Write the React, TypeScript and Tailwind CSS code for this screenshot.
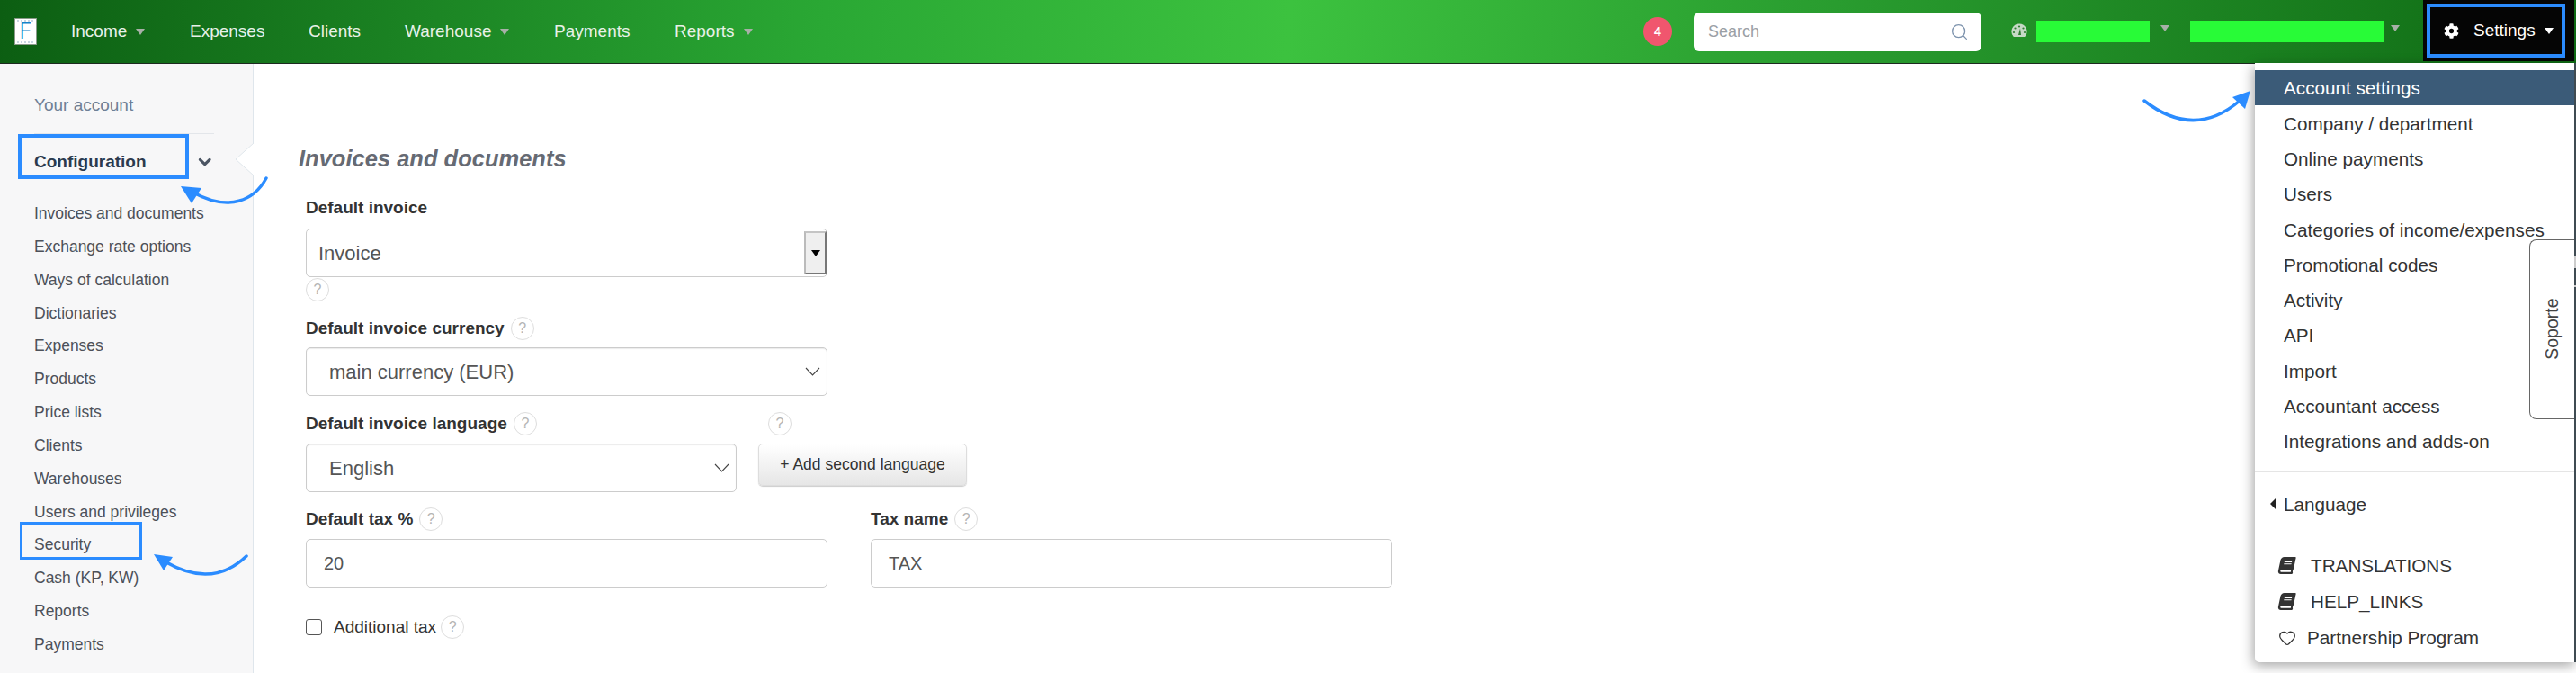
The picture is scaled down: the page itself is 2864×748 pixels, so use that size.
import { ChevronDown, Heart, Search } from 'lucide-react'
import { FaBook, FaCog } from 'react-icons/fa'

const fontSans = "font-['Liberation_Sans',Arial,sans-serif]"

const configLinks = [
  'Invoices and documents',
  'Exchange rate options',
  'Ways of calculation',
  'Dictionaries',
  'Expenses',
  'Products',
  'Price lists',
  'Clients',
  'Warehouses',
  'Users and privileges',
  'Security',
  'Cash (KP, KW)',
  'Reports',
  'Payments',
]

const settingsLinks = [
  'Company / department',
  'Online payments',
  'Users',
  'Categories of income/expenses',
  'Promotional codes',
  'Activity',
  'API',
  'Import',
  'Accountant access',
  'Integrations and adds-on',
]

function Caret({ className = 'border-t-[#a8b0a8]' }: { className?: string }) {
  return <span className={`inline-block h-0 w-0 border-x-[5px] border-t-[7px] border-x-transparent ${className}`} />
}

function Help({ className = '' }: { className?: string }) {
  return (
    <span
      className={`inline-flex h-[26px] w-[26px] shrink-0 items-center justify-center rounded-full border border-[#dddddd] bg-white text-[16px] font-normal text-[#b5b5b5] ${className}`}
    >
      ?
    </span>
  )
}

function NavItem({ label, caret, width }: { label: string; caret?: boolean; width: string }) {
  return (
    <div className={`flex items-center gap-[10px] text-[19px] text-[#e8f1e8] ${width}`}>
      {label}
      {caret && <Caret />}
    </div>
  )
}

function Arrow({ className, line, head, viewBox }: { className: string; line: string; head: string; viewBox: string }) {
  return (
    <svg className={`pointer-events-none absolute ${className}`} viewBox={viewBox} fill="none">
      <path d={line} stroke="#2b8cff" strokeWidth="3.5" strokeLinecap="round" />
      <polygon points={head} fill="#2b8cff" />
    </svg>
  )
}

function Gauge() {
  return (
    <svg viewBox="0 0 20 20" className="h-5 w-5">
      <path d="M10 1.5a8.5 8.5 0 0 0-6.6 13.9c.3.4.7.6 1.2.6h10.8c.5 0 .9-.2 1.2-.6A8.5 8.5 0 0 0 10 1.5z" fill="#c6d9c6" />
      <circle cx="10" cy="4.5" r="1.1" fill="#2f7d32" />
      <circle cx="5.5" cy="6.5" r="1.1" fill="#2f7d32" />
      <circle cx="14.5" cy="6.5" r="1.1" fill="#2f7d32" />
      <circle cx="4" cy="11" r="1.1" fill="#2f7d32" />
      <circle cx="16" cy="11" r="1.1" fill="#2f7d32" />
      <path d="M9 14l2-7.5 1 7.5z" fill="#2f7d32" />
    </svg>
  )
}

function Logo() {
  return (
    <div className="relative ml-4 flex h-[30px] w-[25px] items-center justify-center border border-[#8a9a8a] bg-white font-['Inter',sans-serif] text-[24px] font-light leading-none text-[#1583c9]">
      <span className="absolute inset-x-[2px] top-[1px] h-[2px] bg-[repeating-linear-gradient(90deg,#c9d6e2_0,#c9d6e2_2px,transparent_2px,transparent_4px)]" />
      F
      <span className="absolute inset-x-[2px] bottom-[1px] h-[2px] bg-[repeating-linear-gradient(90deg,#c9d6e2_0,#c9d6e2_2px,transparent_2px,transparent_4px)]" />
    </div>
  )
}

function Header() {
  return (
    <header className="flex h-[71px] items-center border-b border-[#1d2a20] bg-[linear-gradient(95deg,#0c5e12_0%,#2aa834_32%,#3cc23f_50%,#2a9e30_70%,#0f6a14_100%)]">
      <Logo />
      <div className="ml-[38px] flex items-center">
        <NavItem label="Income" caret width="w-[132px]" />
        <NavItem label="Expenses" width="w-[132px]" />
        <NavItem label="Clients" width="w-[107px]" />
        <NavItem label="Warehouse" caret width="w-[166px]" />
        <NavItem label="Payments" width="w-[134px]" />
        <NavItem label="Reports" caret width="w-[120px]" />
      </div>
      <span className="ml-[957px] flex h-8 w-8 items-center justify-center rounded-full bg-[#f0566e] text-[14px] font-bold text-white">
        4
      </span>
      <div className="ml-6 flex h-[43px] w-[320px] items-center justify-between rounded-[6px] bg-white pl-4 pr-[14px]">
        <span className="text-[18px] text-[#9aa0a6]">Search</span>
        <Search size={21} strokeWidth={1.5} className="text-[#7d93ad]" />
      </div>
      <div className="ml-8">
        <Gauge />
      </div>
      <div className="ml-[9px] h-6 w-[126px] bg-[#28fb37]" />
      <span className="ml-3 -mt-[8px] flex">
        <Caret />
      </span>
      <div className="ml-[23px] h-6 w-[215px] bg-[#28fb37]" />
      <span className="ml-2 -mt-[8px] flex">
        <Caret />
      </span>
      <div className="ml-[26px] mr-[2px] flex h-[68px] flex-1 self-start bg-[#050505] p-1 pr-[10px]">
        <div className="flex h-[60px] flex-1 items-center border-4 border-[#2b8cff] pl-[15px] text-[19px] text-white">
          <FaCog size={17} />
          <span className="ml-[16px]">Settings</span>
          <Caret className="ml-[10px] border-t-white" />
        </div>
      </div>
    </header>
  )
}

function Sidebar() {
  return (
    <aside className="relative h-[677px] w-[282px] shrink-0 border-r border-[#dfe6ec] bg-[#f7f7f8] pl-[38px] pt-[35px]">
      <div className="text-[19px] leading-[22px] text-[#6f7f95]">Your account</div>
      <div className="mt-[20px] flex h-[50px] w-[200px] items-center border-t border-[#e3e6ea] pt-[13px] text-[19px] font-bold text-[#2b3a4e]">
        Configuration
        <ChevronDown size={24} strokeWidth={3.5} className="ml-[54px] text-[#4b5563]" />
      </div>
      <ul className="mt-[29px] flex flex-col gap-[16.85px] text-[17.5px] leading-[20px] text-[#4d5159]">
        {configLinks.map((link) => (
          <li key={link}>{link}</li>
        ))}
      </ul>
      <div className="absolute left-5 top-[78px] h-[50px] w-[190px] border-4 border-[#2b8cff]" />
      <div className="absolute left-[22px] top-[509px] h-[42px] w-[136px] border-[3.5px] border-[#2b8cff]" />
      <div className="absolute -right-px top-[88px] h-9 w-5 bg-white [clip-path:polygon(0_50%,100%_0,100%_100%)]" />
      <svg className="absolute -right-px top-[88px] h-9 w-5" viewBox="0 0 20 36" fill="none">
        <path d="M20 0L0 18l20 18" stroke="#dfe6ec" />
      </svg>
    </aside>
  )
}

function Label({ children }: { children: React.ReactNode }) {
  return <span className="text-[19px] font-bold leading-[22px] text-[#333333]">{children}</span>
}

function SelectBox({ label, width }: { label: string; width: string }) {
  return (
    <div className={`flex h-[54px] items-center justify-between rounded-[5px] border border-[#cccccc] pl-[25px] pr-[7px] text-[22px] text-[#555555] shadow-[inset_0_1px_1px_rgba(0,0,0,0.08)] ${width}`}>
      {label}
      <svg viewBox="0 0 17 10" className="h-[10px] w-[17px]" fill="none">
        <path d="M1 1l7.5 8L16 1" stroke="#444444" strokeWidth="1.1" />
      </svg>
    </div>
  )
}

function TextBox({ value }: { value: string }) {
  return (
    <div className="flex h-[54px] w-[580px] items-center rounded-[5px] border border-[#cccccc] pl-[19px] text-[20px] text-[#555555]">
      {value}
    </div>
  )
}

function Content() {
  return (
    <main className="flex-1 pl-[50px] pt-[90px]">
      <h2 className="text-[25.5px] font-bold italic leading-[30px] text-[#666a73]">Invoices and documents</h2>
      <div className="ml-[8px] mt-[29px] w-[1208px]">
        <Label>Default invoice</Label>
        <div className="mt-[10px] flex h-[54px] w-[580px] rounded-[5px] border border-[#cccccc] pl-[13px] text-[22px] text-[#555555]">
          <span className="flex-1 self-center">Invoice</span>
          <div className="my-[2px] flex w-[25px] items-center justify-center border-2 border-b-[#777777] border-l-[#bbbbbb] border-r-[#777777] border-t-[#c4c4c4] bg-[#efefef]">
            <Caret className="border-t-black" />
          </div>
        </div>
        <Help className="mt-[1px] flex" />
        <div className="mt-[17px] flex items-center gap-[7px]">
          <Label>Default invoice currency</Label>
          <Help />
        </div>
        <div className="mt-[8px]">
          <SelectBox label="main currency (EUR)" width="w-[580px]" />
        </div>
        <div className="mt-[18px] flex items-center">
          <Label>Default invoice language</Label>
          <Help className="ml-[7px]" />
          <Help className="ml-[257px]" />
        </div>
        <div className="mt-[9px] flex items-start gap-[24px]">
          <SelectBox label="English" width="w-[479px]" />
          <div className="flex h-[47px] w-[232px] items-center justify-center rounded-[5px] border border-[#dddddd] bg-[linear-gradient(#ffffff,#e6e6e6)] text-[17.5px] text-[#333333] shadow-[0_1px_1px_rgba(0,0,0,0.2)]">
            + Add second language
          </div>
        </div>
        <div className="mt-[17px] flex gap-[48px]">
          <div>
            <div className="mb-[9px] flex items-center gap-[7px]">
              <Label>Default tax %</Label>
              <Help />
            </div>
            <TextBox value="20" />
          </div>
          <div>
            <div className="mb-[9px] flex items-center gap-[7px]">
              <Label>Tax name</Label>
              <Help />
            </div>
            <TextBox value="TAX" />
          </div>
        </div>
        <div className="mt-[30px] flex items-center">
          <span className="h-[18px] w-[18px] rounded-[3px] border border-[#555555] bg-white" />
          <span className="ml-[13px] text-[19px] text-[#333333]">Additional tax</span>
          <Help className="ml-[5px]" />
        </div>
      </div>
    </main>
  )
}

function SettingsMenu() {
  return (
    <div className="absolute right-0 top-[70px] h-[666px] w-[357px] rounded-bl-[5px] border-r-2 border-[#3f4b52] bg-white pt-2 text-[20.7px] text-[#333333] shadow-[-2px_4px_14px_rgba(0,0,0,0.35)]">
      <div className="flex h-[39px] items-center bg-[#3b5b78] pl-8 pt-[1px] text-white">Account settings</div>
      <ul className="flex flex-col pb-[14px]">
        {settingsLinks.map((link) => (
          <li key={link} className="flex h-[39.3px] items-center pl-8 pt-[1px]">
            {link}
          </li>
        ))}
      </ul>
      <div className="flex h-[70px] items-center border-y border-[#e5e5e5] pl-[17px] pt-[3px]">
        <span className="h-0 w-0 border-y-[6px] border-r-[6px] border-y-transparent border-r-[#222222]" />
        <span className="ml-[9px]">Language</span>
      </div>
      <ul className="flex flex-col pt-[15px]">
        <li className="flex h-[40px] items-center pl-[26px]">
          <FaBook size={19} className="-skew-x-12" />
          <span className="ml-[17px]">TRANSLATIONS</span>
        </li>
        <li className="flex h-[40px] items-center pl-[26px]">
          <FaBook size={19} className="-skew-x-12" />
          <span className="ml-[17px]">HELP_LINKS</span>
        </li>
        <li className="flex h-[40px] items-center pl-[26px]">
          <Heart size={20} strokeWidth={1.5} />
          <span className="ml-[12px]">Partnership Program</span>
        </li>
      </ul>
    </div>
  )
}

export default function App() {
  return (
    <div className={`relative h-[748px] w-[2864px] overflow-hidden bg-white ${fontSans}`}>
      <Header />
      <div className="flex">
        <Sidebar />
        <Content />
      </div>
      <SettingsMenu />

      <div className="absolute right-[2px] top-[266px] flex h-[200px] w-[50px] items-center justify-center rounded-l-[8px] border border-r-0 border-[#666666] bg-white">
        <span className="-mt-[1px] rotate-[-90deg] text-[19.5px] text-[#444444]">Soporte</span>
      </div>
      <div className="absolute right-0 top-[285px] h-[13px] w-[2px] bg-[#cccccc]" />
      <div className="absolute right-0 top-[317px] h-[2px] w-[2px] bg-[#cccccc]" />

      {/* Annotation arrows */}
      <Arrow
        className="left-[195px] top-[190px] h-[45px] w-[110px]"
        viewBox="0 0 110 45"
        line="M101 8C88 32 60 46 20 24"
        head="6,17 29,19 18,36"
      />
      <Arrow
        className="left-[165px] top-[605px] h-[40px] w-[115px]"
        viewBox="0 0 115 40"
        line="M109 13C85 36 55 40 20 20"
        head="6,11 27,14 17,29"
      />
      <Arrow
        className="left-[2380px] top-[96px] h-[45px] w-[125px]"
        viewBox="0 0 125 45"
        line="M4 16C40 44 75 46 110 16"
        head="122,5 102,12 116,25"
      />
    </div>
  )
}
